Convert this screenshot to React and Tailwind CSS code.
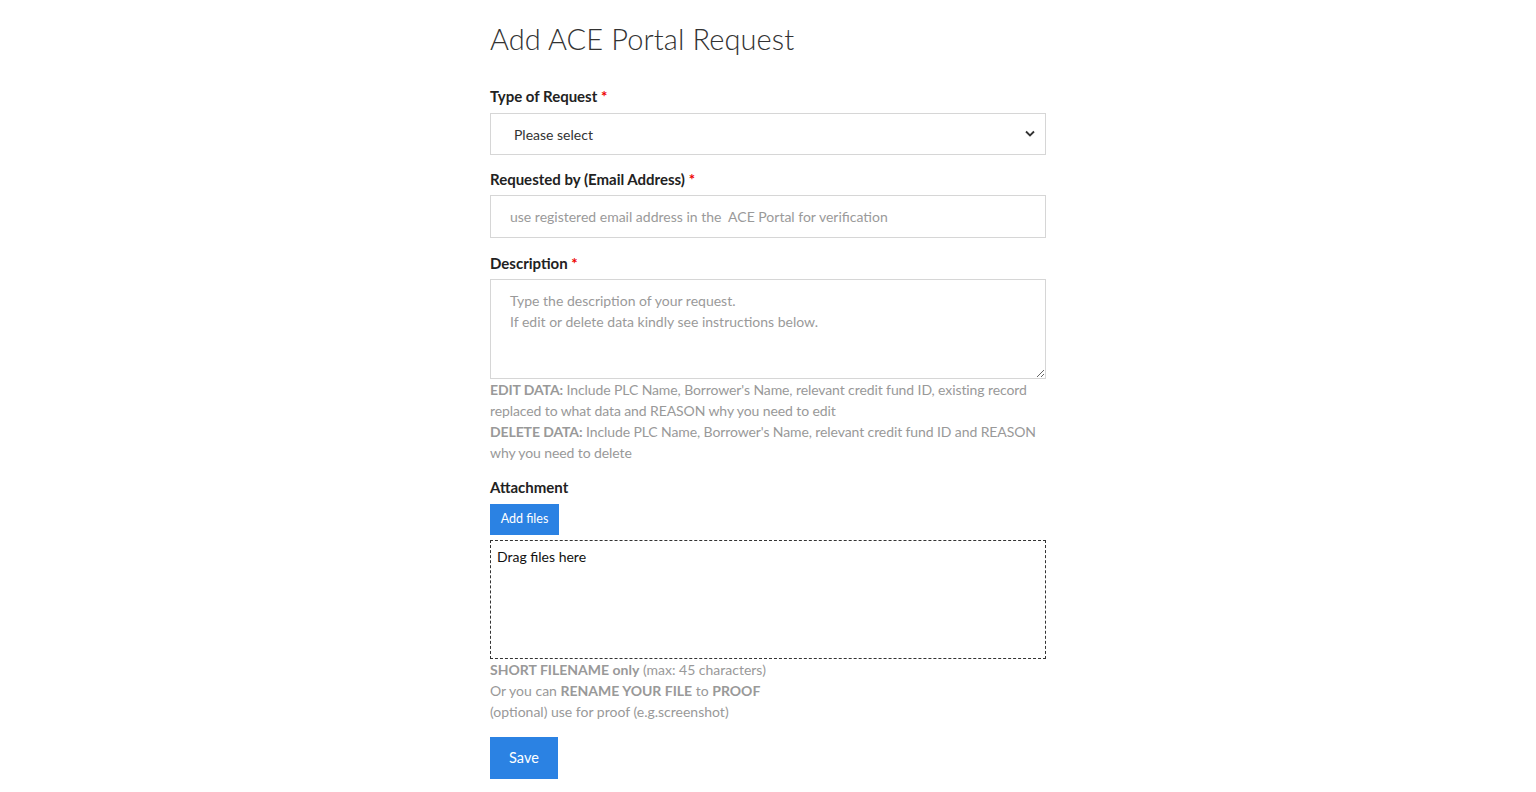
import React from "react";

export default function App() {
  const font = { fontFamily: '"Lato", "Liberation Sans", sans-serif' };
  return (
    <div className="min-h-screen bg-white text-[#333]" style={font}>
      <div className="mx-auto w-[556px] pt-[17px] pb-[13px]">
        <h1 className="text-[29px] font-light leading-[44px] tracking-[0.1px] text-[#333]">Add ACE Portal Request</h1>

        <div className="mt-[25px]">
          <label className="block text-[15px] font-bold leading-[20px] text-[#222]">
            Type of Request <span className="text-[#e00]">*</span>
          </label>
          <div className="relative mt-[7px]">
            <select className="block h-[42px] w-full appearance-none border border-[#d6d6d6] bg-white pl-[23px] text-[14px] text-[#333] outline-none" style={font} defaultValue="">
              <option value="">Please select</option>
            </select>
            <svg className="pointer-events-none absolute right-[11px] top-[17px]" width="10" height="7" viewBox="0 0 10 7">
              <path d="M1 1.5 L5 5.5 L9 1.5" fill="none" stroke="#333" strokeWidth="1.8" />
            </svg>
          </div>
        </div>

        <div className="mt-[14px]">
          <label className="block text-[15px] font-bold leading-[20px] text-[#222]">
            Requested by (Email Address) <span className="text-[#e00]">*</span>
          </label>
          <input
            className="mt-[6px] block h-[43px] w-full border border-[#d6d6d6] px-[19px] text-[14px] outline-none placeholder:text-[#9a9a9a]"
            style={font}
            placeholder="use registered email address in the  ACE Portal for verification"
          />
        </div>

        <div className="mt-[15px]">
          <label className="block text-[15px] font-bold leading-[20px] text-[#222]">
            Description <span className="text-[#e00]">*</span>
          </label>
          <textarea
            className="mt-[6px] block h-[100px] w-full border border-[#d6d6d6] px-[19px] pt-[10px] text-[14px] leading-[21px] outline-none placeholder:text-[#9a9a9a]"
            style={font}
            placeholder={"Type the description of your request.\nIf edit or delete data kindly see instructions below."}
          />
          <div className="text-[14px] leading-[21px] tracking-[-0.1px] text-[#999]">
            <p><b>EDIT DATA:</b> Include PLC Name, Borrower's Name, relevant credit fund ID, existing record replaced to what data and REASON why you need to edit</p>
            <p><b>DELETE DATA:</b> Include PLC Name, Borrower's Name, relevant credit fund ID and REASON why you need to delete</p>
          </div>
        </div>

        <div className="mt-[14px]">
          <label className="block text-[15px] font-bold leading-[20px] text-[#222]">Attachment</label>
          <button className="mt-[7px] block h-[31px] w-[69px] bg-[#2b82e3] text-[12.5px] text-white" style={font}>Add files</button>
          <div className="mt-[5px] h-[119px] w-full border border-dashed border-[#333] px-[6px] pt-[5px] text-[14px] leading-[21px] text-[#111]">
            Drag files here
          </div>
          <div className="text-[14px] leading-[21px] text-[#999]">
            <p><b>SHORT FILENAME only</b> (max: 45 characters)</p>
            <p>Or you can <b>RENAME YOUR FILE</b> to <b>PROOF</b></p>
            <p>(optional) use for proof (e.g.screenshot)</p>
          </div>
        </div>

        <button className="mt-[15px] block h-[42px] w-[68px] bg-[#2b82e3] text-[14.5px] text-white" style={font}>Save</button>
      </div>
    </div>
  );
}
